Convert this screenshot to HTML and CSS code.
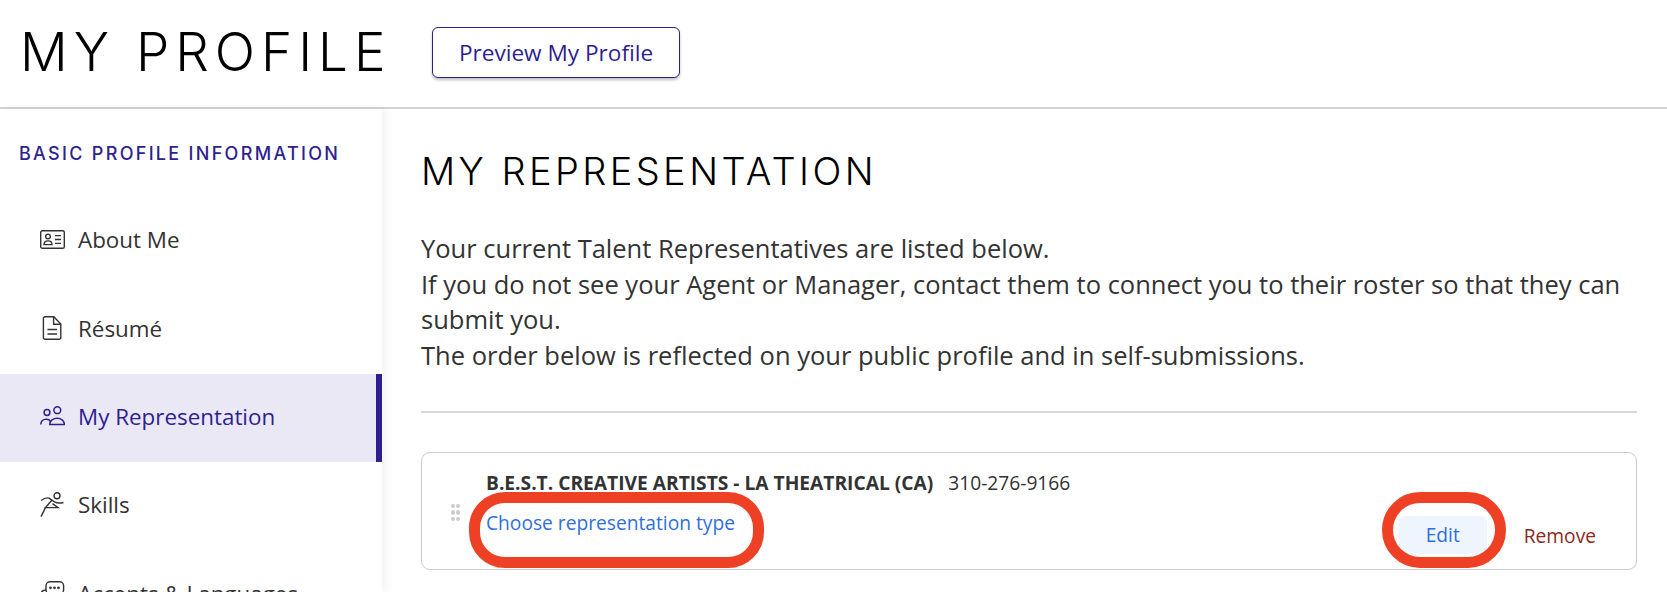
FILE: index.html
```html
<!DOCTYPE html>
<html lang="en">
<head>
  <meta charset="UTF-8">
  <title>My Profile</title>
  <link rel="stylesheet" href="styles.css">
</head>
<body>
  <header class="top">
    <h1>MY PROFILE</h1>
    <button class="preview">Preview My Profile</button>
  </header>
  <div class="page">
    <nav class="side">
      <h2>BASIC PROFILE INFORMATION</h2>
      <ul>
        <li class="item">
          <svg viewBox="0 0 25 19" width="25" height="19" fill="none" stroke="currentColor" stroke-width="1.4">
            <rect x="0.7" y="0.7" width="23.6" height="17.6" rx="1.6"/>
            <circle cx="8" cy="6.4" r="2.3"/>
            <path d="M4 14.6c0-5 8-5 8 0z"/>
            <path d="M15 5.6h6M15 9.5h6M15 13.4h6"/>
          </svg>
          <span>About Me</span>
        </li>
        <li class="item">
          <svg viewBox="0 0 25 24" width="25" height="24" fill="none" stroke="currentColor" stroke-width="1.4">
            <path d="M5.2 0.8h8.6l7 7.2v13.4a1.8 1.8 0 0 1-1.8 1.8H5.2a1.8 1.8 0 0 1-1.8-1.8V2.6a1.8 1.8 0 0 1 1.8-1.8z"/>
            <path d="M13.6 1v7.2h7"/>
            <path d="M7.5 13.5h9.5M7.5 18h9.5"/>
          </svg>
          <span>Résumé</span>
        </li>
        <li class="item active">
          <svg viewBox="0 0 25 20" width="25" height="20" fill="none" stroke="currentColor" stroke-width="1.5">
            <circle cx="7" cy="6.5" r="2.9"/>
            <circle cx="17.3" cy="4.2" r="3.4"/>
            <path d="M0.8 18.6c0-6 7.5-6.8 9.6-3.4"/>
            <path d="M9.8 18.6c0-8.4 14.6-8.4 14.6 0z"/>
          </svg>
          <span>My Representation</span>
        </li>
        <li class="item">
          <svg viewBox="0 0 25 25" width="25" height="25" fill="none" stroke="currentColor" stroke-width="1.4">
            <circle cx="17" cy="3.8" r="3"/>
            <path d="M1 8.5c3-2.2 6-3 8-2.4l5.5 3.8c2.5 1.4 5.5 1.4 9 0.6"/>
            <path d="M12 8l-6.5 7.6h12.5l-5.5-4"/>
            <path d="M5.5 15.6L1 24.6"/>
          </svg>
          <span>Skills</span>
        </li>
        <li class="item">
          <svg viewBox="0 0 25 25" width="25" height="25" fill="none" stroke="currentColor" stroke-width="1.4">
            <rect x="6" y="0.8" width="17.6" height="12" rx="4"/>
            <circle cx="10.5" cy="6.8" r="0.7"/>
            <circle cx="14.5" cy="6.8" r="0.7"/>
            <circle cx="18.5" cy="6.8" r="0.7"/>
            <path d="M6 9c-4 0-5 3-5 5"/>
          </svg>
          <span>Accents &amp; Languages</span>
        </li>
      </ul>
    </nav>
    <main class="main">
      <h2>MY REPRESENTATION</h2>
      <p>Your current Talent Representatives are listed below.<br>
      If you do not see your Agent or Manager, contact them to connect you to their roster so that they can submit you.<br>
      The order below is reflected on your public profile and in self-submissions.</p>
      <hr>
      <div class="card">
        <span class="grip"><i></i><i></i><i></i><i></i><i></i><i></i></span>
        <div class="card-body">
          <div class="agency"><b>B.E.S.T. CREATIVE ARTISTS - LA THEATRICAL (CA)</b><span>310-276-9166</span></div>
          <div class="card-row">
            <a class="choose">Choose representation type</a>
            <div class="actions">
              <a class="edit">Edit</a>
              <a class="remove">Remove</a>
            </div>
          </div>
        </div>
        <div class="ring ring-choose"></div>
        <div class="ring ring-edit"></div>
      </div>
    </main>
  </div>
</body>
</html>
```

FILE: styles.css
```css
* {
  margin: 0;
  padding: 0;
  box-sizing: border-box;
}
html, body {
  height: 592px;
  overflow: hidden;
}
body {
  background: #fff;
  color: #333;
  font-family: "Open Sans", "Liberation Sans", sans-serif;
}
.top {
  height: 109px;
  display: flex;
  align-items: flex-start;
  padding: 27px 0 0 20px;
  border-bottom: 2px solid #d3d3d3;
}
.top h1 {
  font-family: Inter, sans-serif;
  font-weight: 300;
  font-size: 53px;
  line-height: 51px;
  letter-spacing: 6px;
  color: #000;
  width: 412px;
  white-space: nowrap;
}
.preview {
  width: 248px;
  height: 51px;
  border: 1px solid #2e1f8f;
  border-radius: 6px;
  background: #fff;
  color: #2e1f8f;
  font-family: inherit;
  font-size: 22.6px;
  box-shadow: 0 2px 3px rgba(0, 0, 0, 0.25);
}
.page {
  display: flex;
  height: 483px;
}
.side {
  width: 382px;
  flex: none;
  box-shadow: 4px 0 8px rgba(0, 0, 0, 0.05);
}
.side h2 {
  font-family: Inter, sans-serif;
  font-weight: 500;
  font-size: 18px;
  line-height: 22px;
  letter-spacing: 2.3px;
  color: #2e1f8f;
  padding: 34px 0 0 19px;
  height: 88px;
  white-space: nowrap;
}
.side ul {
  list-style: none;
}
.item {
  height: 88.4px;
  display: flex;
  align-items: center;
  gap: 13px;
  padding: 0 0 3px 40px;
  font-size: 22.4px;
}
.item svg {
  flex: none;
}
.active {
  background: #ebe8f5;
  border-right: 6px solid #2e1f8f;
  color: #2e1f8f;
  font-weight: 500;
}
.main {
  flex: 1;
  padding: 39px 30px 0 421px;
  margin-left: -382px;
}
.main h2 {
  font-family: Inter, sans-serif;
  font-weight: 300;
  font-size: 38px;
  line-height: 46px;
  letter-spacing: 3.4px;
  color: #000;
}
.main p {
  margin-top: 37px;
  font-size: 25.5px;
  line-height: 35.5px;
}
.main hr {
  border: 0;
  border-top: 2px solid #d8d8d8;
  margin: 38px 0 39px;
}
.card {
  position: relative;
  height: 118px;
  border: 1px solid #ccc;
  border-radius: 9px;
  display: flex;
}
.grip {
  width: 9px;
  height: 17px;
  margin: 51px 0 0 29px;
  display: grid;
  grid-template-columns: 4px 4px;
  gap: 2px 1px;
  flex: none;
}
.grip i {
  background: #ccc;
  border-radius: 50%;
}
.card-body {
  flex: 1;
  padding: 17px 40px 0 26px;
  font-size: 19.2px;
}
.agency {
  display: flex;
  gap: 15px;
  line-height: 25px;
}
.agency b {
  font-weight: 700;
}
.card-row {
  display: flex;
  justify-content: space-between;
  margin-top: 13px;
}
.choose {
  color: #2f6fdd;
  line-height: 30px;
}
.actions {
  display: flex;
  align-items: center;
  gap: 37px;
  margin-top: 8px;
}
.edit {
  width: 88px;
  height: 38px;
  line-height: 38px;
  text-align: center;
  background: #eef5fd;
  border-radius: 6px;
  color: #2f6fdd;
}
.remove {
  color: #8c2a1d;
}
.ring {
  position: absolute;
  border: 11px solid #ee4025;
}
.ring-choose {
  left: 47px;
  top: 39px;
  width: 295px;
  height: 76px;
  border-radius: 36px;
}
.ring-edit {
  left: 960px;
  top: 39px;
  width: 124px;
  height: 76px;
  border-radius: 38px;
}
```
